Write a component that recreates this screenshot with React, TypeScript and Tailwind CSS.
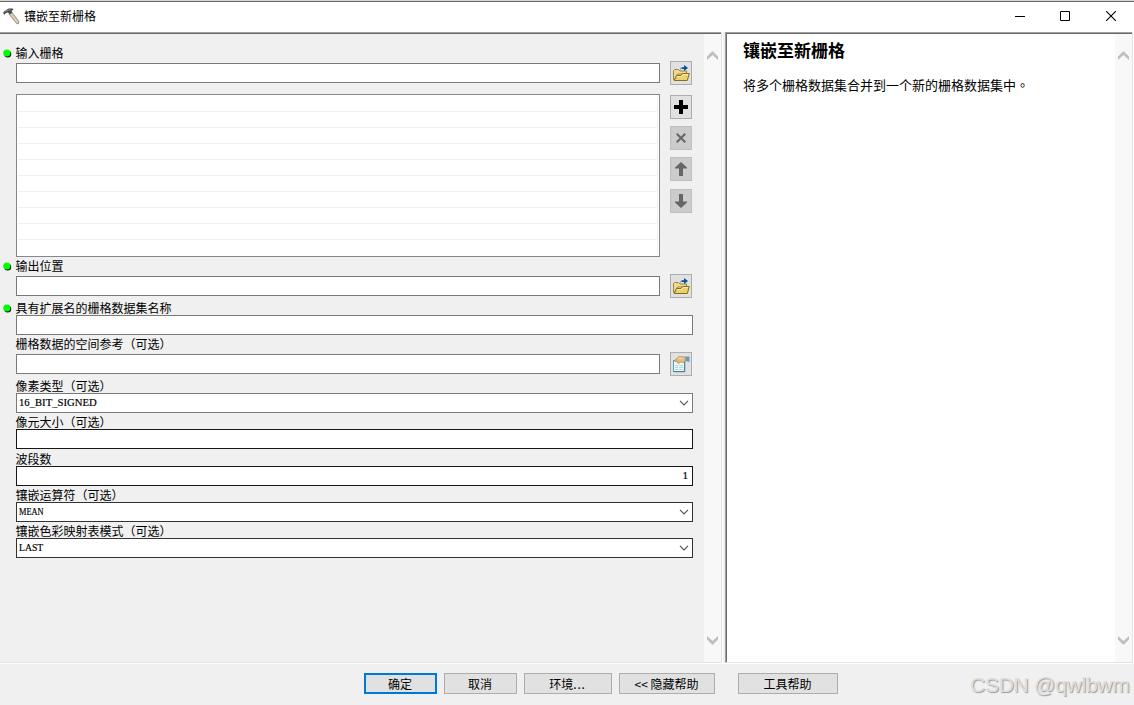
import type { ReactNode } from 'react'
import clsx from 'clsx'

const rows = Array.from({ length: 9 }, (_, i) => i)

const footerButtons = [
  { label: '确定', className: 'w-[73px] border-2 border-[#0078d7]' },
  { label: '取消', className: 'ml-[7px] w-[73px] border border-[#adadad]' },
  { label: '环境', dots: true, className: 'ml-[7px] w-[88px] border border-[#adadad]' },
  { label: '<< 隐藏帮助', className: 'ml-[7px] w-[96px] border border-[#adadad]' },
  { label: '工具帮助', className: 'ml-[23px] w-[100px] border border-[#adadad]' }
]

function HammerIcon() {
  return (
    <svg width="17" height="18" viewBox="0 0 17 18" fill="none">
      <path d="M6 6.2 L8.8 4.2 L15.8 13.2 L15.4 15.8 L13.6 15.5 Z" fill="#cbbda4" stroke="#857b6b" strokeWidth=".7" />
      <path d="M8 6.3 L14.5 14.4" stroke="#eee4d2" strokeWidth="1" />
      <path d="M0 5 L1.3 3.2 L4 1.6 L5.5 .4 L9.8 .5 L10.5 1.7 L8.6 2.8 L9.4 4.2 L7 6.4 L4.8 4.4 L2.6 5.3 L1.5 6.8 Z" fill="#4a4d4d" />
      <path d="M2.3 3.5 L5.5 2 L7.5 2.2" stroke="#9ba1a1" strokeWidth=".8" />
    </svg>
  )
}

function FolderIcon() {
  return (
    <svg width="17" height="17" viewBox="0 0 17 17" fill="none">
      <path d="M.5 14.5 V5.5 L1.5 4.5 H5.5 L7 6 H13.5 V9 H4.5 L1.5 14.5 Z" fill="#efd994" stroke="#a08238" />
      <path d="M1.2 15.5 L3.5 10.5 H8 L9.5 8.5 H16.3 L14.3 15.5 Z" fill="#ecd06a" stroke="#8a6c1c" />
      <path d="M4 11.6 H8.6 L10 9.6 H15" stroke="#fff0aa" />
      <path d="M7.5 5 V3 H8.5" stroke="#8bbce0" />
      <path d="M8.5 2.2 H11 V0 L15 3 L11 6 V4 H8.5 Z" fill="#07539b" />
    </svg>
  )
}

function PropertiesIcon() {
  return (
    <svg width="17" height="17" viewBox="0 0 17 17" fill="none">
      <rect x=".5" y="4.5" width="11" height="11" fill="#eef8fd" stroke="#5a9fbd" />
      <path d="M2 9.5 H5 M6 9.5 H10 M2 11.5 H5 M6 11.5 H10 M2 13.5 H5 M6 13.5 H10" stroke="#a9d5ea" />
      <path d="M11.7 6 V15.7 H1" stroke="#477b91" />
      <path d="M2 4 L5.5 .8 H11 L13 1.5 V5 L10 6.5 L7 6 L6 7.5 L4.5 7 L5 5.2 L2 5.8 Z" fill="#e5bd7e" stroke="#b58443" strokeWidth=".7" />
      <path d="M5 2.3 H10" stroke="#f8dfaf" />
      <path d="M12.5 .5 H16.5 V6 L12.5 5 Z" fill="#5b9fc9" />
    </svg>
  )
}

function PlusIcon() {
  return (
    <svg width="14" height="14" viewBox="0 0 14 14" shapeRendering="crispEdges">
      <path d="M5 0 H9 V5 H14 V9 H9 V14 H5 V9 H0 V5 H5 Z" fill="#000" />
    </svg>
  )
}

function CrossIcon() {
  return (
    <svg width="10" height="10" viewBox="0 0 10 10">
      <path d="M.7 .7 L9.3 9.3 M9.3 .7 L.7 9.3" stroke="#666" strokeWidth="2" />
    </svg>
  )
}

function ArrowIcon({ down = false }: { down?: boolean }) {
  return (
    <svg width="12" height="14" viewBox="0 0 12 14" className={down ? 'rotate-180' : ''}>
      <path d="M6 0 L12 5.5 V6.5 H8 V14 H4 V6.5 H0 V5.5 Z" fill="#666" />
    </svg>
  )
}

function Chevron() {
  return (
    <svg width="10" height="6" viewBox="0 0 10 6" fill="none">
      <path d="M1 .8 L5 4.8 L9 .8" stroke="#555" strokeWidth="1.2" />
    </svg>
  )
}

function ScrollBar() {
  const arrow = <path d="M0 5.5 L5.5 0 L11 5.5 V9 L5.5 3.9 L0 9 Z" fill="#bfbfbf" />
  return (
    <div className="flex w-[17px] shrink-0 flex-col items-center justify-between bg-[#f8f8f8] pt-[17px] pb-[17px]">
      <svg width="11" height="9" viewBox="0 0 11 9">{arrow}</svg>
      <svg width="11" height="9" viewBox="0 0 11 9" className="rotate-180">{arrow}</svg>
    </div>
  )
}

function ToolButton({ children, disabled = false, className }: { children: ReactNode; disabled?: boolean; className?: string }) {
  return (
    <button
      className={clsx(
        'flex h-6 w-[22px] shrink-0 items-center justify-center border',
        disabled ? 'border-[#bfbfbf] bg-[#cccccc]' : 'border-[#adadad] bg-[#e1e1e1]',
        className
      )}
    >
      {children}
    </button>
  )
}

function Label({ children, required = false, className }: { children: ReactNode; required?: boolean; className: string }) {
  return (
    <div className={clsx('flex h-[14px] items-center leading-[14px]', className)}>
      <span className="w-[15.5px] shrink-0 pl-[3px]">
        {required && (
          <svg width="9" height="9" viewBox="0 0 9 9">
            <circle cx="4.7" cy="5" r="3.5" fill="#111" />
            <circle cx="3.8" cy="4" r="3.6" fill="#00ff00" />
          </svg>
        )}
      </span>
      <span className="whitespace-nowrap">{children}</span>
    </div>
  )
}

function Field({ value, select = false, className, textClass }: { value?: string; select?: boolean; className: string; textClass?: string }) {
  return (
    <div className={clsx('ml-4 flex h-5 items-center justify-between border bg-white pr-[3px] pl-[2px]', className)}>
      <span className={clsx("origin-left pb-[3px] font-['Liberation_Serif',serif] text-[11px] leading-[14px] [-webkit-text-stroke:0.2px_#000]", textClass)}>{value}</span>
      {select && <Chevron />}
    </div>
  )
}

function BrowseField({ children }: { children: ReactNode }) {
  return (
    <div className="flex h-5 items-center">
      <Field className="w-[644px] border-[#7a7a7a]" />
      <ToolButton className="ml-[10px]">{children}</ToolButton>
    </div>
  )
}

export default function App() {
  return (
    <div className="flex h-[705px] w-[1134px] flex-col overflow-hidden bg-[#f0f0f0] font-['Noto_Sans_CJK_SC',sans-serif] text-xs text-black">
      <div className="h-px shrink-0 bg-[#d8d8d8]" />
      <div className="h-px shrink-0 bg-[#666]" />
      <header className="flex h-[30px] shrink-0 items-center bg-white pl-[3px]">
        <HammerIcon />
        <span className="ml-1 pb-[3px] leading-4">镶嵌至新栅格</span>
        <div className="ml-auto flex items-center pr-[18px] pb-0.5">
          <svg width="10" height="10" className="mr-[35px]">
            <path d="M0 5.5 H10" stroke="#000" />
          </svg>
          <svg width="10" height="10" className="mr-9" fill="none">
            <path d="M.5 .5 H9.5 V9.5 H.5 Z" stroke="#000" />
          </svg>
          <svg width="10" height="10" viewBox="0 0 10 10" fill="none">
            <path d="M0 0 L10 10 M10 0 L0 10" stroke="#000" strokeWidth="1.1" />
          </svg>
        </div>
      </header>

      <main className="flex h-[631px] shrink-0">
        {/* Parameters */}
        <section className="flex w-[722px] shrink-0 border-r border-r-[#e3e3e3] border-b border-b-[#e3e3e3] bg-[#f0f0f0]">
          <div className="flex min-w-0 grow flex-col">
            <div className="h-px shrink-0 bg-[#a0a0a0]" />
            <div className="h-px shrink-0 bg-[#696969]" />
            <div className="flex min-h-0 grow">
              <div className="w-[704px] shrink-0">
                <Label required className="mt-3 mb-[3px]">输入栅格</Label>
                <BrowseField><FolderIcon /></BrowseField>
                <div className="mt-[11px] flex">
                  <div className="ml-4 h-[163px] w-[644px] border border-[#828790] bg-white px-px">
                    {rows.map((row) => (
                      <div key={row} className={clsx('border-r border-b border-[#f0f0f0]', row === 0 ? 'h-[17px]' : 'h-4')} />
                    ))}
                    <div className="h-[15px] border-r border-[#f0f0f0]" />
                  </div>
                  <div className="ml-[10px] flex flex-col pt-px">
                    <ToolButton><PlusIcon /></ToolButton>
                    <ToolButton disabled className="mt-[7px]"><CrossIcon /></ToolButton>
                    <ToolButton disabled className="mt-[7px]"><ArrowIcon /></ToolButton>
                    <ToolButton disabled className="mt-2"><ArrowIcon down /></ToolButton>
                  </div>
                </div>
                <Label required className="mt-0.5 mb-[3px]">输出位置</Label>
                <BrowseField><FolderIcon /></BrowseField>
                <Label required className="mt-[5px]">具有扩展名的栅格数据集名称</Label>
                <Field className="w-[677px] border-[#7a7a7a]" />
                <Label className="mt-0.5 mb-[3px]">栅格数据的空间参考（可选）</Label>
                <BrowseField><PropertiesIcon /></BrowseField>
                <Label className="mt-[5px]">像素类型（可选）</Label>
                <Field select value="16_BIT_SIGNED" textClass="scale-x-[0.97]" className="w-[677px] border-[#7a7a7a]" />
                <Label className="mt-0.5">像元大小（可选）</Label>
                <Field className="w-[677px] border-[#171717]" />
                <Label className="mt-[3px]">波段数</Label>
                <Field value="1" textClass="ml-auto pr-px" className="w-[677px] border-[#171717]" />
                <Label className="mt-0.5">镶嵌运算符（可选）</Label>
                <Field select value="MEAN" textClass="scale-x-[0.76]" className="w-[677px] border-[#333]" />
                <Label className="mt-0.5">镶嵌色彩映射表模式（可选）</Label>
                <Field select value="LAST" textClass="scale-x-[0.88]" className="w-[677px] border-[#333]" />
              </div>
              <ScrollBar />
            </div>
          </div>
        </section>
        <div className="w-[3px] shrink-0 border-l border-white" />

        {/* Help */}
        <section className="flex grow flex-col border-r border-b border-l border-r-[#e3e3e3] border-b-[#e3e3e3] border-l-[#a0a0a0] bg-white">
          <div className="h-px shrink-0 bg-[#a0a0a0]" />
          <div className="flex grow border-t border-l border-[#696969]">
            <div className="grow pt-1 pl-4">
              <h1 className="text-[17px] leading-6 font-bold">镶嵌至新栅格</h1>
              <p className="mt-[13px] text-[13px] leading-5">
                将多个栅格数据集合并到一个新的栅格数据集中<span className="font-['Noto_Sans_CJK_TC',sans-serif]">。</span>
              </p>
            </div>
            <ScrollBar />
          </div>
        </section>
        <div className="w-px shrink-0 bg-white" />
      </main>

      <footer className="flex grow items-start border-t border-white pt-[9px] pl-[364px]">
        {footerButtons.map((button) => (
          <button key={button.label} className={clsx('flex h-[21px] shrink-0 items-center justify-center bg-[#e1e1e1] pr-px leading-4 whitespace-pre', button.className)}>
            {button.label}
            {button.dots && <span className="tracking-[0.8px]">...</span>}
          </button>
        ))}
        <span className="ml-[132px] font-['Liberation_Sans',sans-serif] text-[21px] leading-6 tracking-[-0.25px] whitespace-nowrap text-[#dedede] [text-shadow:1px_1px_1px_#999]">
          CSDN @qwlbwm
        </span>
      </footer>
    </div>
  )
}
